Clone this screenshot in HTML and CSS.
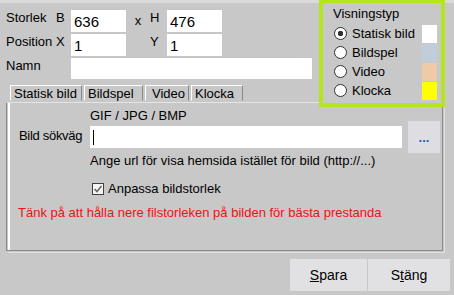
FILE: index.html
```html
<!DOCTYPE html>
<html lang="sv">
<head>
    <meta charset="UTF-8">
    <title>Visningsinställningar</title>
    <link rel="stylesheet" href="styles.css">
</head>
<body>

    <div class="top">
        <div class="fields">
            <span class="lbl row-start">Storlek</span>
            <span class="lbl">B</span>
            <input type="text" value="636">
            <span class="lbl times">x</span>
            <span class="lbl">H</span>
            <input type="text" value="476">

            <span class="lbl row-start">Position</span>
            <span class="lbl">X</span>
            <input type="text" value="1">
            <span></span>
            <span class="lbl">Y</span>
            <input type="text" value="1">

            <span class="lbl row-start wide">Namn</span>
            <input type="text" class="name">
        </div>

        <div class="group">
            <div class="group-title">Visningstyp</div>
            <label class="opt"><input type="radio" name="typ" checked>Statisk bild<span class="swatch white"></span></label>
            <label class="opt"><input type="radio" name="typ">Bildspel<span class="swatch blue"></span></label>
            <label class="opt"><input type="radio" name="typ">Video<span class="swatch peach"></span></label>
            <label class="opt"><input type="radio" name="typ">Klocka<span class="swatch yellow"></span></label>
        </div>
    </div>

    <div class="tabs">
        <span class="tab t-static">Statisk bild</span>
        <span class="tab t-slides">Bildspel</span>
        <span class="tab t-video">Video</span>
        <span class="tab t-clock">Klocka</span>
    </div>

    <div class="panel">
        <div class="hint">GIF / JPG / BMP</div>
        <div class="path-row">
            <label class="path-label">Bild sökväg</label>
            <input type="text" class="path">
            <button class="browse">...</button>
        </div>
        <div class="note">Ange url för visa hemsida istället för bild (http://...)</div>
        <label class="check">
            <span class="box"><svg width="10" height="10" viewBox="0 0 10 10"><polyline points="1.5,5 4,7.5 8.5,2" fill="none" stroke="#6a6a6a" stroke-width="1.6"/></svg></span>
            Anpassa bildstorlek
        </label>
        <div class="warn">Tänk på att hålla nere filstorleken på bilden för bästa prestanda</div>
    </div>

    <div class="actions">
        <button class="btn save"><u>S</u>para</button>
        <button class="btn close">S<u>t</u>äng</button>
    </div>

</body>
</html>
```

FILE: styles.css
```css
body {
    margin: 0;
    width: 454px;
    height: 295px;
    overflow: hidden;
    background: linear-gradient(#dadada 0 3px, #c8c8c8 3px);
    font-family: "Liberation Sans", Arial, sans-serif;
    font-size: 13px;
    color: #000;
}

.top {
    display: flex;
    justify-content: space-between;
    align-items: flex-start;
    height: 85px;
    padding: 0 9px 0 6px;
}

.fields {
    display: grid;
    grid-template-columns: 50px 15px 55px 24px 17px 55px 90px;
    grid-template-rows: 22px 22px 21px;
    row-gap: 2px;
    align-items: start;
    padding-top: 10px;
}

.lbl {
    line-height: 15px;
}

.row-start {
    grid-column-start: 1;
}

.wide {
    grid-column: 1 / 3;
}

.times {
    text-align: center;
    padding-top: 3px;
}

.fields input {
    box-sizing: border-box;
    width: 100%;
    height: 100%;
    border: 0;
    padding: 0 3px;
    background: #fff;
    font: 15px "Liberation Sans", Arial, sans-serif;
    color: #000;
    outline: none;
}

.fields .name {
    grid-column: 3 / 8;
}

.group {
    position: relative;
    z-index: 1;
    box-sizing: border-box;
    width: 126px;
    height: 108px;
    margin-top: -1px;
    border: 4px solid #b5e61d;
    background: #c8c8c8;
    padding: 3px 0 0 10px;
}

.group-title {
    line-height: 15px;
    margin-bottom: 3px;
}

.opt {
    display: flex;
    align-items: center;
    height: 19px;
}

.opt input {
    appearance: none;
    box-sizing: border-box;
    width: 13px;
    height: 13px;
    margin: 0 5px 0 1px;
    border: 1px solid #303030;
    border-radius: 50%;
    background: #fff;
}

.opt input:checked {
    background: radial-gradient(circle, #303030 0 2.5px, #fff 3px);
}

.swatch {
    width: 15px;
    height: 18px;
    margin-left: auto;
    margin-right: 4px;
}

.white { background: #ffffff; }
.blue { background: #c0cedb; }
.peach { background: #efc9a8; }
.yellow { background: #ffff00; }

.tabs {
    display: flex;
    gap: 2px;
    margin-left: 10px;
}

.tab {
    box-sizing: border-box;
    height: 16px;
    padding: 0 3px;
    line-height: 15px;
    white-space: nowrap;
    border: 1px solid;
    border-color: #fff #8a8a8a #c8c8c8 #fff;
}

.t-static { width: 72px; }
.t-slides { width: 59px; }
.t-video { width: 44px; padding-left: 6px; }
.t-clock { width: 52px; }

.panel {
    box-sizing: border-box;
    width: 437px;
    height: 149px;
    margin: 1px 0 0 6px;
    padding: 7px 0 0 12px;
    border: 1px solid #8a8a8a;
    border-top-color: #e4e4e4;
    box-shadow: inset 1px 0 0 #c8c8c8, inset 3px 0 0 #fff, 1px 1px 0 #c8c8c8, 2px 2px 0 #e0e0e0;
}

.hint {
    margin-left: 71px;
    line-height: 12px;
}

.path-row {
    display: flex;
    align-items: center;
    height: 32px;
    margin-top: -1px;
}

.path-label {
    width: 71px;
    padding-bottom: 3px;
    letter-spacing: -0.3px;
}

.path {
    box-sizing: border-box;
    width: 312px;
    height: 22px;
    margin-right: 6px;
    border: 0;
    background: linear-gradient(#000, #000) no-repeat 3px 50% / 1px 15px, #fff;
    outline: none;
}

.browse {
    width: 32px;
    height: 32px;
    padding: 0;
    border: 0;
    background: #dedee2;
    color: #1b5fb0;
    font: bold 13px "Liberation Sans", Arial, sans-serif;
}

.note {
    margin-left: 71px;
    line-height: 15px;
}

.check {
    display: flex;
    align-items: center;
    height: 15px;
    margin: 13px 0 0 73px;
}

.box {
    box-sizing: border-box;
    display: flex;
    align-items: center;
    justify-content: center;
    width: 12px;
    height: 12px;
    margin-right: 4px;
    border: 1px solid #404040;
    background: #f4f4f4;
}

.warn {
    margin: 9px 0 0 -1px;
    line-height: 15px;
    color: #f01010;
}

.actions {
    display: flex;
    justify-content: flex-end;
    gap: 1px;
    margin-top: 8px;
    padding-right: 4px;
}

.btn {
    height: 32px;
    padding: 0;
    border: 0;
    background: #e1e1e4;
    font: 14px "Liberation Sans", Arial, sans-serif;
    color: #000;
}

.save { width: 77px; }
.close { width: 82px; }
```
